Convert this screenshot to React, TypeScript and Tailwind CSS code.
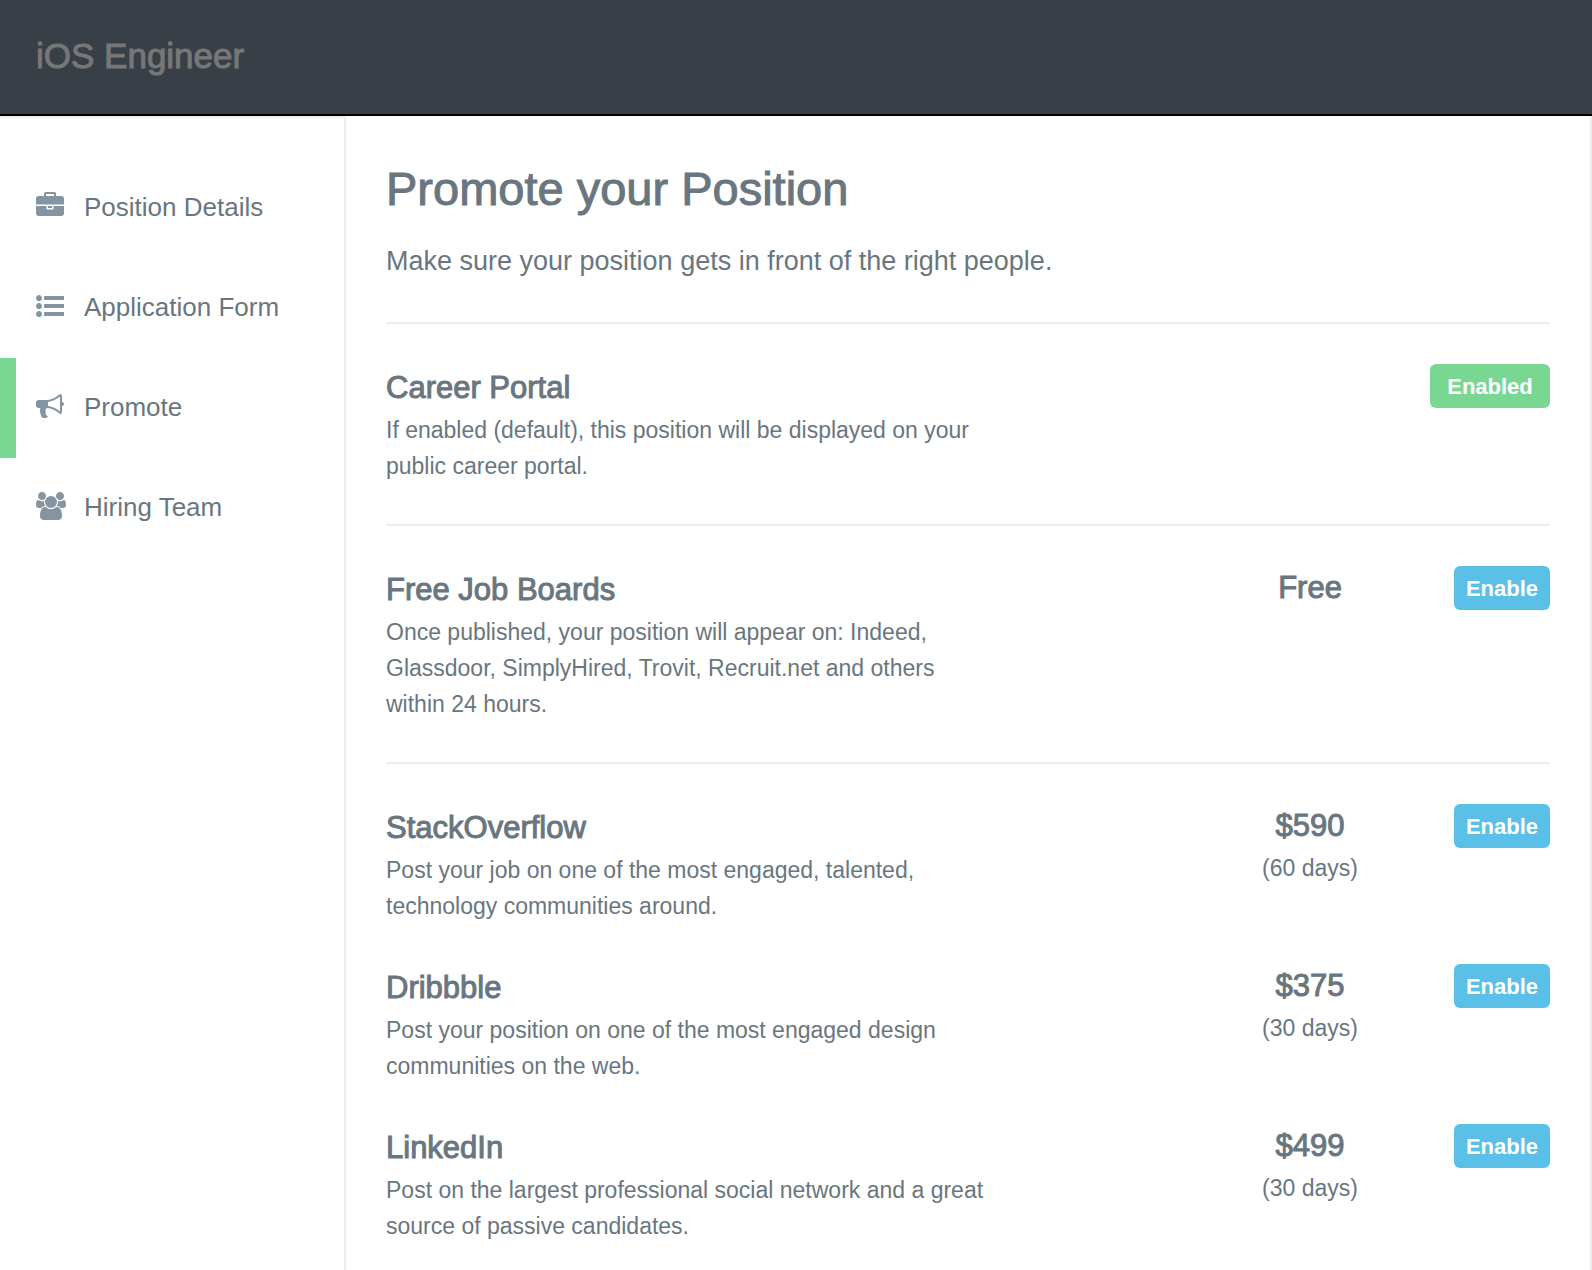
import clsx from "clsx";

const navItems = [
  {
    href: "#details",
    label: "Position Details",
    icon: "M640 1280h512v128h-512v-128zM1792 640v-480q0 -66 -47 -113t-113 -47h-1472q-66 0 -113 47t-47 113v480h672v-160q0 -26 19 -45t45 -19h320q26 0 45 19t19 45v160h672zM1024 640v-128h-256v128h256zM1792 1120v-384h-1792v384q0 66 47 113t113 47h352v160q0 40 28 68t68 28h576q40 0 68 -28t28 -68v-160h352q66 0 113 -47t47 -113z",
  },
  {
    href: "#form",
    label: "Application Form",
    icon: "M384 128q0 -80 -56 -136t-136 -56t-136 56t-56 136t56 136t136 56t136 -56t56 -136zM384 640q0 -80 -56 -136t-136 -56t-136 56t-56 136t56 136t136 56t136 -56t56 -136zM384 1152q0 -80 -56 -136t-136 -56t-136 56t-56 136t56 136t136 56t136 -56t56 -136zM1792 224v-192q0 -13 -9.5 -22.5t-22.5 -9.5h-1216q-13 0 -22.5 9.5t-9.5 22.5v192q0 13 9.5 22.5t22.5 9.5h1216q13 0 22.5 -9.5t9.5 -22.5zM1792 736v-192q0 -13 -9.5 -22.5t-22.5 -9.5h-1216q-13 0 -22.5 9.5t-9.5 22.5v192q0 13 9.5 22.5t22.5 9.5h1216q13 0 22.5 -9.5t9.5 -22.5zM1792 1248v-192q0 -13 -9.5 -22.5t-22.5 -9.5h-1216q-13 0 -22.5 9.5t-9.5 22.5v192q0 13 9.5 22.5t22.5 9.5h1216q13 0 22.5 -9.5t9.5 -22.5z",
  },
  {
    href: "#promote",
    label: "Promote",
    icon: "M1664 896q53 0 90.5 -37.5t37.5 -90.5t-37.5 -90.5t-90.5 -37.5v-384q0 -52 -38 -90t-90 -38q-417 347 -812 380q-58 -19 -91 -66t-31 -100.5t40 -92.5q-20 -33 -23 -65.5t6 -58t33.5 -55t48 -50t61.5 -50.5q-29 -58 -111.5 -83t-168.5 -11.5t-132 55.5q-7 23 -29.5 87.5t-32 94.5t-23 89t-15 101t3.5 98.5t22 110.5h-122q-66 0 -113 47t-47 113v192q0 66 47 113t113 47h480q435 0 896 384q52 0 90 -38t38 -90v-384zM1536 292v954q-394 -302 -768 -343v-270q377 -42 768 -341z",
    active: true,
  },
  {
    href: "#team",
    label: "Hiring Team",
    icon: "M593 640q-162 -5 -265 -128h-134q-82 0 -138 40.5t-56 118.5q0 353 124 353q6 0 43.5 -21t97.5 -42.5t119 -21.5q67 0 133 23q-5 -37 -5 -66q0 -139 81 -256zM1664 3q0 -120 -73 -189.5t-194 -69.5h-874q-121 0 -194 69.5t-73 189.5q0 53 3.5 103.5t14 109t26.5 108.5t43 97.5t62 81t85.5 53.5t111.5 20q10 0 43 -21.5t73 -48t107 -48t135 -21.5t135 21.5t107 48t73 48t43 21.5q61 0 111.5 -20t85.5 -53.5t62 -81t43 -97.5t26.5 -108.5t14 -109t3.5 -103.5zM640 1280q0 -106 -75 -181t-181 -75t-181 75t-75 181t75 181t181 75t181 -75t75 -181zM1344 896q0 -159 -112.5 -271.5t-271.5 -112.5t-271.5 112.5t-112.5 271.5t112.5 271.5t271.5 112.5t271.5 -112.5t112.5 -271.5zM1920 671q0 -78 -56 -118.5t-138 -40.5h-134q-103 123 -265 128q81 117 81 256q0 29 -5 66q66 -23 133 -23q59 0 119 21.5t97.5 42.5t43.5 21q124 0 124 -353zM1792 1280q0 -106 -75 -181t-181 -75t-181 75t-75 181t75 181t181 75t181 -75t75 -181z",
  },
];

type Channel = {
  name: string;
  text: string;
  price?: string;
  days?: string;
  enabled?: boolean;
};

// each group is separated by a rule
const groups: Channel[][] = [
  [
    {
      name: "Career Portal",
      text: "If enabled (default), this position will be displayed on your public career portal.",
      enabled: true,
    },
  ],
  [
    {
      name: "Free Job Boards",
      text: "Once published, your position will appear on: Indeed, Glassdoor, SimplyHired, Trovit, Recruit.net and others within 24 hours.",
      price: "Free",
    },
  ],
  [
    {
      name: "StackOverflow",
      text: "Post your job on one of the most engaged, talented, technology communities around.",
      price: "$590",
      days: "(60 days)",
    },
    {
      name: "Dribbble",
      text: "Post your position on one of the most engaged design communities on the web.",
      price: "$375",
      days: "(30 days)",
    },
    {
      name: "LinkedIn",
      text: "Post on the largest professional social network and a great source of passive candidates.",
      price: "$499",
      days: "(30 days)",
    },
  ],
];

function ChannelRow({ channel }: { channel: Channel }) {
  return (
    <div className="flex items-start">
      <div className="min-w-0 flex-1">
        <h2 className="text-[31px] leading-[48px] [-webkit-text-stroke:1px]">{channel.name}</h2>
        <p className="max-w-[600px] text-[23px] leading-9">{channel.text}</p>
      </div>
      <div className="w-[240px] text-center">
        {channel.price && (
          <p className="text-[31px] leading-[44px] [-webkit-text-stroke:1px]">{channel.price}</p>
        )}
        {channel.days && <p className="text-[23px] leading-10">{channel.days}</p>}
      </div>
      <div className="flex w-[120px] justify-end">
        <button
          type="button"
          className={clsx(
            "h-11 rounded-md text-center text-[22px] font-bold text-white",
            channel.enabled ? "w-[120px] bg-[#79d792]" : "w-24 bg-[#5bc0e7]"
          )}
        >
          {channel.enabled ? "Enabled" : "Enable"}
        </button>
      </div>
    </div>
  );
}

export default function App() {
  return (
    <div className="flex min-h-screen flex-col bg-white font-['Liberation_Sans',Arial,sans-serif] text-[#697680]">
      <header className="flex h-[116px] items-center border-b-2 border-black bg-[#383f47] px-9 pb-0.5">
        <div className="text-[35px] text-[#777777] [-webkit-text-stroke:1px]">iOS Engineer</div>
      </header>
      <div className="flex flex-1">
        <nav className="w-[346px] shrink-0 border-t-2 border-r-2 border-[#eeeeee] pt-10">
          {navItems.map((item) => (
            <a
              key={item.href}
              href={item.href}
              aria-current={item.active ? "page" : undefined}
              className={clsx(
                "flex h-[100px] items-center gap-[18px] border-l-[16px] pb-0.5 pl-5 text-[26px]",
                item.active ? "border-[#79d792]" : "border-transparent"
              )}
            >
              <svg viewBox="0 -1536 1920 1792" className="mb-0.5 h-7 w-[30px] text-[#8594a1]" aria-hidden="true">
                <path d={item.icon} transform="scale(1 -1)" fill="currentColor" />
              </svg>
              {item.label}
            </a>
          ))}
        </nav>
        <main className="min-w-0 flex-1 border-r-2 border-[#eeeeee] px-10 pt-10">
          <h1 className="text-[47px] leading-[66px] [-webkit-text-stroke:1px]">Promote your Position</h1>
          <p className="mt-4 mb-[38px] text-[27px] leading-[46px]">
            Make sure your position gets in front of the right people.
          </p>
          {groups.map((group) => (
            <section
              key={group[0].name}
              className="flex flex-col gap-10 border-t-2 border-[#eeeeee] py-10 last:pb-6"
            >
              {group.map((channel) => (
                <ChannelRow key={channel.name} channel={channel} />
              ))}
            </section>
          ))}
        </main>
      </div>
    </div>
  );
}
